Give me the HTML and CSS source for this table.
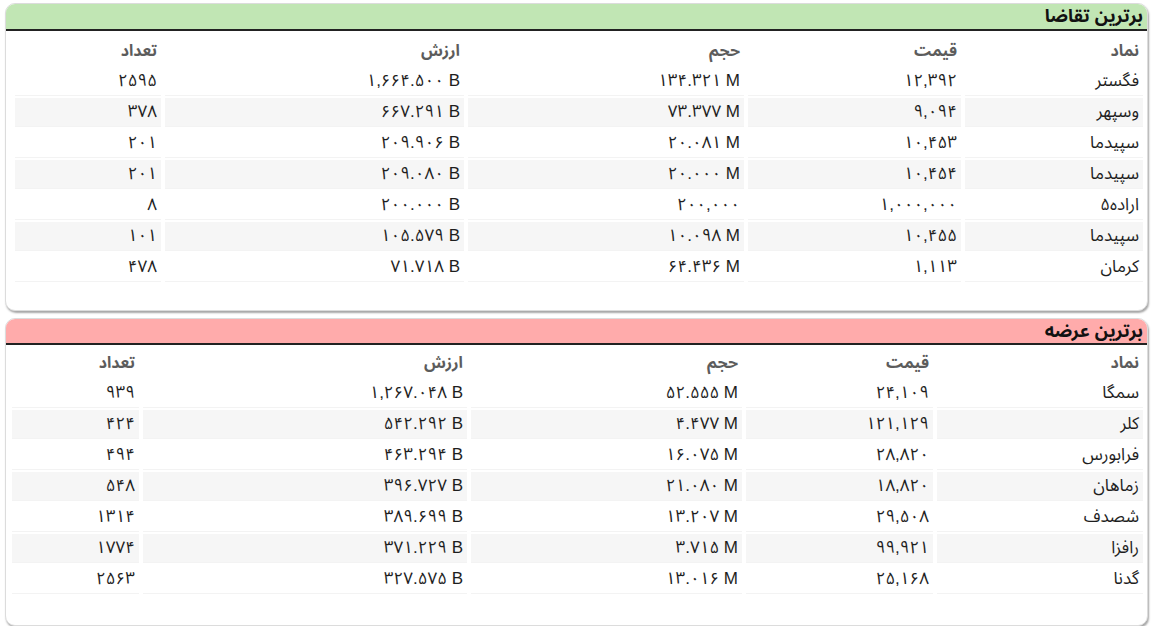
FILE: index.html
```html
<!DOCTYPE html>
<html lang="fa" dir="rtl">
<head>
<meta charset="utf-8">
<link rel="stylesheet" href="styles.css">
</head>
<body>
<div class="page">
  <section class="card">
    <div class="band band-green">برترین تقاضا</div>
    <table class="grid t1">
      <colgroup><col class="c1"><col class="c2"><col class="c3"><col class="c4"><col class="c5"></colgroup>
      <thead><tr><th>نماد</th><th>قیمت</th><th>حجم</th><th>ارزش</th><th>تعداد</th></tr></thead>
      <tbody>
        <tr><td>فگستر</td><td>۱۲,۳۹۲</td><td><span class="ltr">۱۳۴.۳۲۱ M</span></td><td><span class="ltr">۱,۶۶۴.۵۰۰ B</span></td><td>۲۵۹۵</td></tr>
        <tr><td>وسپهر</td><td>۹,۰۹۴</td><td><span class="ltr">۷۳.۳۷۷ M</span></td><td><span class="ltr">۶۶۷.۲۹۱ B</span></td><td>۳۷۸</td></tr>
        <tr><td>سپیدما</td><td>۱۰,۴۵۳</td><td><span class="ltr">۲۰.۰۸۱ M</span></td><td><span class="ltr">۲۰۹.۹۰۶ B</span></td><td>۲۰۱</td></tr>
        <tr><td>سپیدما</td><td>۱۰,۴۵۴</td><td><span class="ltr">۲۰.۰۰۰ M</span></td><td><span class="ltr">۲۰۹.۰۸۰ B</span></td><td>۲۰۱</td></tr>
        <tr><td>اراده۵</td><td>۱,۰۰۰,۰۰۰</td><td>۲۰۰,۰۰۰</td><td><span class="ltr">۲۰۰.۰۰۰ B</span></td><td>۸</td></tr>
        <tr><td>سپیدما</td><td>۱۰,۴۵۵</td><td><span class="ltr">۱۰.۰۹۸ M</span></td><td><span class="ltr">۱۰۵.۵۷۹ B</span></td><td>۱۰۱</td></tr>
        <tr><td>کرمان</td><td>۱,۱۱۳</td><td><span class="ltr">۶۴.۴۳۶ M</span></td><td><span class="ltr">۷۱.۷۱۸ B</span></td><td>۴۷۸</td></tr>
      </tbody>
    </table>
  </section>
  <section class="card card-second">
    <div class="band band-red">برترین عرضه</div>
    <table class="grid t2">
      <colgroup><col class="c1"><col class="c2"><col class="c3"><col class="c4"><col class="c5"></colgroup>
      <thead><tr><th>نماد</th><th>قیمت</th><th>حجم</th><th>ارزش</th><th>تعداد</th></tr></thead>
      <tbody>
        <tr><td>سمگا</td><td>۲۴,۱۰۹</td><td><span class="ltr">۵۲.۵۵۵ M</span></td><td><span class="ltr">۱,۲۶۷.۰۴۸ B</span></td><td>۹۳۹</td></tr>
        <tr><td>کلر</td><td>۱۲۱,۱۲۹</td><td><span class="ltr">۴.۴۷۷ M</span></td><td><span class="ltr">۵۴۲.۲۹۲ B</span></td><td>۴۲۴</td></tr>
        <tr><td>فرابورس</td><td>۲۸,۸۲۰</td><td><span class="ltr">۱۶.۰۷۵ M</span></td><td><span class="ltr">۴۶۳.۲۹۴ B</span></td><td>۴۹۴</td></tr>
        <tr><td>زماهان</td><td>۱۸,۸۲۰</td><td><span class="ltr">۲۱.۰۸۰ M</span></td><td><span class="ltr">۳۹۶.۷۲۷ B</span></td><td>۵۴۸</td></tr>
        <tr><td>شصدف</td><td>۲۹,۵۰۸</td><td><span class="ltr">۱۳.۲۰۷ M</span></td><td><span class="ltr">۳۸۹.۶۹۹ B</span></td><td>۱۳۱۴</td></tr>
        <tr><td>رافزا</td><td>۹۹,۹۲۱</td><td><span class="ltr">۳.۷۱۵ M</span></td><td><span class="ltr">۳۷۱.۲۲۹ B</span></td><td>۱۷۷۴</td></tr>
        <tr><td>گدنا</td><td>۲۵,۱۶۸</td><td><span class="ltr">۱۳.۰۱۶ M</span></td><td><span class="ltr">۳۲۷.۵۷۵ B</span></td><td>۲۵۶۳</td></tr>
      </tbody>
    </table>
  </section>
</div>
</body>
</html>
```

FILE: styles.css
```css
html, body {
  margin: 0;
  padding: 0;
  background: #ffffff;
}
body {
  font-family: "Liberation Sans", "Noto Sans Arabic", "DejaVu Sans", sans-serif;
  color: #1e1e1e;
}
.page {
  display: flex;
  flex-direction: column;
  gap: 7px;
  padding: 3px 7px 0 5px;
}
.card {
  background: #fff;
  border: 1px solid #dcdcdc;
  border-radius: 10px;
  box-shadow: 1px 2px 2px rgba(0,0,0,0.35);
  overflow: hidden;
  height: 308px;
  box-sizing: border-box;
}
.band {
  height: 25px;
  line-height: 25px;
  border-bottom: 2px solid #222;
  font-weight: bold;
  font-size: 18px;
  padding: 0 4px;
  color: #111;
  overflow: hidden;
}
.band-green { background: #c1e6b4; }
.band-red { background: #ffabab; }
.card-second .band {
  height: 24px;
  line-height: 24px;
}
.grid {
  border-collapse: separate;
  border-spacing: 4px 2px;
  margin: 3px 0 0 6px;
  width: calc(100% - 6px);
  table-layout: fixed;
  font-size: 17px;
  line-height: 20px;
}
.card-second .grid {
  margin-top: 1px;
}
.grid th {
  font-weight: bold;
  color: #5c5c5c;
  text-align: right;
  height: 29px;
  padding: 0 4px;
  font-size: 16px;
}
.grid td {
  text-align: right;
  height: 28px;
  padding: 0 4px;
  border-bottom: 1px solid #f3f3f3;
  white-space: nowrap;
}
.grid tbody tr:nth-child(even) td {
  background: #f6f6f6;
}
.ltr {
  direction: ltr;
  unicode-bidi: isolate;
  display: inline-block;
}
.t1 .c1 { width: 178px; }
.t1 .c2 { width: 213px; }
.t1 .c3 { width: 276px; }
.t1 .c4 { width: 299px; }
.t1 .c5 { width: 146px; }
.t2 .c1 { width: 206px; }
.t2 .c2 { width: 187px; }
.t2 .c3 { width: 271px; }
.t2 .c4 { width: 324px; }
.t2 .c5 { width: 127px; }
```
